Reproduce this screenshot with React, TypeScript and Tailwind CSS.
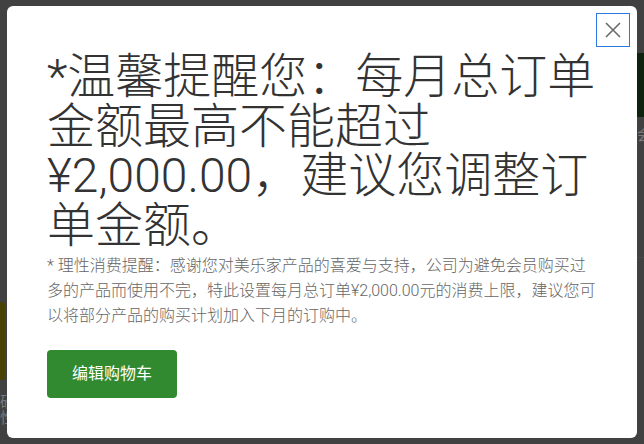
import React from 'react';

const CloseIcon = () => (
  <svg width="18" height="18" viewBox="0 0 18 18" fill="none">
    <path d="M2 2L16 16M16 2L2 16" stroke="#6b6b6b" strokeWidth="1.6" />
  </svg>
);

// page underneath the overlay, only thin strips of it peek out
const BackgroundPage = () => (
  <div className="flex h-[444px] w-[644px] bg-[#414141]">
    <div className="flex w-[7px] flex-col">
      <div className="h-[302px]" />
      <div className="h-[78px] w-[5px] rounded-r-[3px] bg-[#4a4204]" />
      <div className="mt-[14px] text-[15px] leading-[16px] text-[#7a7a7a]">砂</div>
      <div className="text-[15px] leading-[16px] text-[#7a7a7a]">性</div>
    </div>
    <div className="flex-1" />
    <div className="flex w-[7px] flex-col">
      <div className="h-[53px]" />
      <div className="h-[64px] bg-[#0f220e]" />
      <div className="mt-[10px] text-[15px] leading-[16px] text-[#7a7a7a]">会</div>
      <div className="mt-[114px] h-px bg-[#4a4a4a]" />
    </div>
  </div>
);

export default function App() {
  return (
    <div className="relative h-[444px] w-[644px] overflow-hidden font-['Roboto','Noto_Sans_CJK_SC',sans-serif]">
      <BackgroundPage />
      <div className="absolute inset-0 flex px-[7px] py-[6px]">
        <div className="flex flex-1 flex-col rounded-[6px] bg-white">
          <div className="flex justify-end pr-[7px] pt-[7px]">
            <button className="flex h-[34px] w-[34px] items-center justify-center border border-[#2a78e4] bg-white">
              <CloseIcon />
            </button>
          </div>
          <div className="px-[40px]">
            <h1 className="mt-[5px] text-[48px] font-light leading-[49.5px] text-[#333333]">
              *温馨提醒您：每月总订单金额最高不能超过¥2,000.00，建议您调整订单金额。
            </h1>
            <p className="mt-[3px] text-[16px] font-light leading-[25px] text-[#666666]">
              * 理性消费提醒：感谢您对美乐家产品的喜爱与支持，公司为避免会员购买过多的产品而使用不完，特此设置每月总订单¥2,000.00元的消费上限，建议您可以将部分产品的购买计划加入下月的订购中。
            </p>
            <button className="mt-[22px] h-[48px] w-[130px] rounded-[4px] bg-[#328a30] text-[16px] font-normal text-white">
              编辑购物车
            </button>
          </div>
        </div>
      </div>
    </div>
  );
}
